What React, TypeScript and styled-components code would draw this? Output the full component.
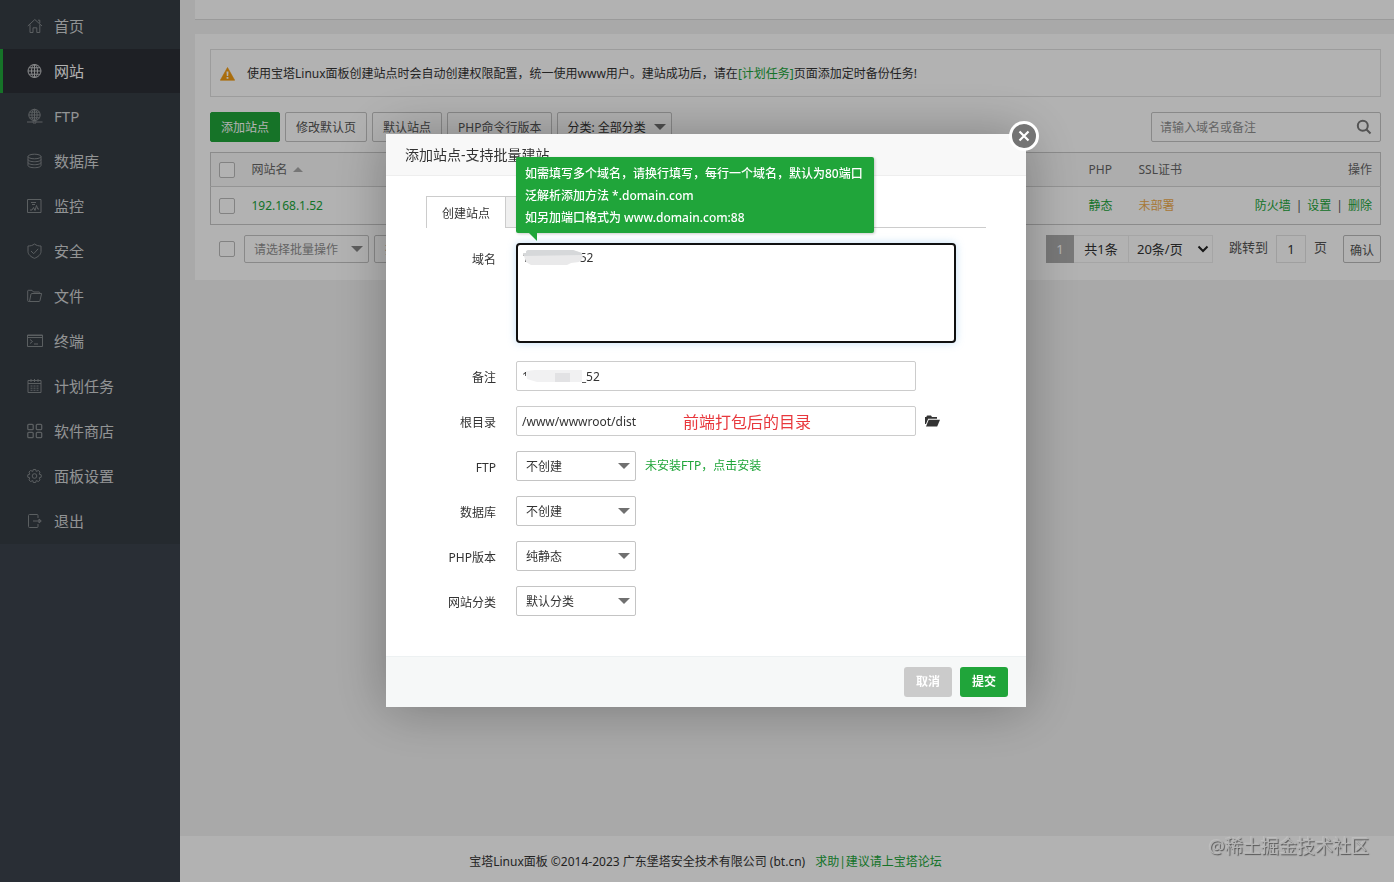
import React from "react";
import styled, { createGlobalStyle, css } from "styled-components";

const GlobalStyle = createGlobalStyle`
  * { box-sizing: border-box; }
  body {
    margin: 0;
    background: #f2f2f2;
    color: #333;
    font-family: "Noto Sans", "Noto Sans CJK SC", sans-serif;
    font-size: 12px;
    line-height: 20px;
  }
  button, input, select, textarea { font: inherit; color: inherit; margin: 0; }
  a { color: #20a53a; text-decoration: none; }
`;

const Page = styled.div`
  display: flex;
  min-height: 100vh;
`;

/* Sidebar */
const Sidebar = styled.nav`
  flex: 0 0 180px;
  background: #3c424d;
`;
const Menu = styled.ul`
  list-style: none;
  margin: 0;
  padding: 4px 0 0;
  background: #363d44;
`;
const MenuItem = styled.li`
  padding-bottom: 1px;
`;
const MenuLink = styled.a<{ $active?: boolean }>`
  display: flex;
  align-items: center;
  gap: 11px;
  height: 44px;
  padding-left: 24px;
  border-left: 3px solid transparent;
  font-size: 15px;
  color: #d2d4d6;
  svg { color: #83888c; }
  ${(p) =>
    p.$active &&
    css`
      background: #2c2e36;
      border-left-color: #20a53a;
      color: #fff;
      svg { color: #c4c6c8; }
    `}
`;
const LineIcon = styled.svg`
  width: 16px;
  height: 16px;
  fill: none;
  stroke: currentColor;
  stroke-width: 1;
`;

/* Main column */
const Main = styled.main`
  flex: 1;
  min-width: 0;
  display: flex;
  flex-direction: column;
`;
const TopCard = styled.div`
  height: 20px;
  margin-left: 15px;
  background: #fff;
  border-bottom: 1px solid #ddd;
`;
const Card = styled.section`
  margin: 14px 0 0 15px;
  padding: 15px 13px 17px 15px;
  background: #fff;
`;
const Notice = styled.div`
  display: flex;
  align-items: center;
  gap: 12px;
  height: 48px;
  padding: 2px 0 0 9px;
  border: 1px solid #e0e0e0;
`;
const Toolbar = styled.div`
  display: flex;
  gap: 5px;
  margin: 15px 0 10px;
`;
const Button = styled.button<{ $primary?: boolean }>`
  height: 30px;
  padding: 2px 10px 0;
  border: 1px solid ${(p) => (p.$primary ? "#20a53a" : "#c4c4c4")};
  border-radius: 2px;
  background: ${(p) => (p.$primary ? "#20a53a" : "#fff")};
  color: ${(p) => (p.$primary ? "#fff" : "#555")};
  white-space: nowrap;
`;
const SearchBox = styled.label`
  display: flex;
  align-items: center;
  width: 230px;
  height: 30px;
  margin-left: auto;
  padding: 0 8px;
  border: 1px solid #c4c4c4;
  border-radius: 2px;
  color: #777;
  input {
    flex: 1;
    min-width: 0;
    border: 0;
    padding: 2px 0 0;
    background: none;
    outline: none;
  }
  input::placeholder { color: #909090; }
`;

const SelectWrap = styled.span<{ $width: number }>`
  position: relative;
  display: inline-block;
  width: ${(p) => p.$width}px;
  svg {
    position: absolute;
    right: 6px;
    top: 50%;
    margin-top: -3px;
    pointer-events: none;
  }
`;
const SelectBox = styled.select<{ $height: number; $muted?: boolean }>`
  appearance: none;
  display: block;
  width: 100%;
  height: ${(p) => p.$height}px;
  padding: 2px 9px 0;
  border: 1px solid #c4c4c4;
  border-radius: 2px;
  background: #fff;
  color: ${(p) => (p.$muted ? "#909090" : "#333")};
`;

const Table = styled.table`
  width: 100%;
  border-collapse: collapse;
  table-layout: fixed;
  border: 1px solid #c8c8c8;
  th, td {
    padding: 0 8px;
    text-align: left;
    font-weight: 400;
    white-space: nowrap;
  }
  th {
    height: 34px;
    background: #f8f8f8;
    color: #666;
    border-bottom: 1px solid #d4d4d4;
  }
  td { height: 38px; }
`;
const Col = styled.col<{ $width?: number }>`
  width: ${(p) => (p.$width ? p.$width + "px" : "auto")};
`;
const RightHead = styled.th`
  && { text-align: right; }
`;
const RightCell = styled.td`
  && { text-align: right; }
  a + a::before {
    content: "|";
    color: #555;
    margin: 0 5px;
  }
`;
const CheckBox = styled.input`
  appearance: none;
  display: block;
  width: 16px;
  height: 16px;
  border: 1px solid #bbb;
  border-radius: 2px;
  background: #fff;
`;
const SortHead = styled.span`
  display: flex;
  align-items: center;
  gap: 5px;
`;
const SslLink = styled.a`
  color: #f0ad4e;
`;

const Pager = styled.div`
  display: flex;
  align-items: center;
  height: 28px;
  margin-top: 10px;
  padding-left: 9px;
`;
const BatchGroup = styled.div`
  display: flex;
  align-items: center;
  gap: 5px;
  padding-left: 9px;
`;
const BatchButton = styled.button`
  height: 28px;
  padding: 2px 10px 0;
  border: 1px solid #c4c4c4;
  border-radius: 2px;
  background: #fff;
  color: #909090;
`;
const PageGroup = styled.div`
  display: flex;
  align-items: center;
  margin-left: auto;
  font-size: 13px;
`;
const Current = styled.span`
  width: 28px;
  height: 28px;
  line-height: 28px;
  text-align: center;
  background: #adadad;
  color: #fff;
`;
const Total = styled.span`
  width: 55px;
  height: 28px;
  line-height: 26px;
  text-align: center;
  border: 1px solid #ececec;
  border-left: 0;
`;
const PageSize = styled.span`
  position: relative;
  width: 84px;
  select {
    appearance: none;
    display: block;
    width: 100%;
    height: 28px;
    padding: 0 8px;
    border: 1px solid #ececec;
    border-left: 0;
    background: #fff;
  }
  svg {
    position: absolute;
    right: 4px;
    top: 10px;
    pointer-events: none;
  }
`;
const Jump = styled.label`
  display: flex;
  align-items: center;
  gap: 8px;
  margin: 0 16px;
  line-height: 24px;
  color: #555;
  span { padding-bottom: 4px; }
  input {
    width: 30px;
    height: 28px;
    padding: 0;
    border: 1px solid #e4e4e4;
    text-align: center;
    color: #333;
  }
`;
const Confirm = styled.button`
  width: 38px;
  height: 28px;
  padding: 4px 0 0;
  border: 1px solid #bbb;
  border-radius: 2px;
  background: #fff;
  font-size: 12px;
  color: #555;
`;

const Footer = styled.footer`
  display: flex;
  justify-content: center;
  gap: 10px;
  margin-top: auto;
  padding: 16px 163px 10px 0;
  background: #fff;
`;

/* Dialog */
const Overlay = styled.div`
  position: fixed;
  inset: 0;
  display: flex;
  justify-content: center;
  align-items: flex-start;
  padding: 134px 0 0 18px;
  background: rgba(0, 0, 0, 0.3);
`;
const Dialog = styled.section`
  position: relative;
  width: 640px;
  background: #fff;
  box-shadow: 1px 1px 50px rgba(0, 0, 0, 0.3);
`;
const DialogTitle = styled.h2`
  margin: 0;
  height: 42px;
  padding-left: 19px;
  border-bottom: 1px solid #eee;
  background: #f8f8f8;
  font-size: 14px;
  font-weight: 400;
  line-height: 42px;
`;
const CloseButton = styled.button`
  position: absolute;
  top: -13px;
  right: -13px;
  width: 30px;
  height: 30px;
  display: flex;
  align-items: center;
  justify-content: center;
  padding: 0;
  border: 3px solid #fff;
  border-radius: 50%;
  background: #747474;
  color: #fff;
`;
const DialogBody = styled.div`
  padding: 20px 40px 40px;
`;
const Tabs = styled.div`
  display: flex;
  height: 32px;
  border-bottom: 1px solid #ccc;
`;
const Tab = styled.button<{ $active?: boolean }>`
  width: 80px;
  height: ${(p) => (p.$active ? 32 : 31)}px;
  padding: 2px 0 0;
  border: 1px solid #ccc;
  border-bottom: 0;
  border-left-width: ${(p) => (p.$active ? 1 : 0)}px;
  background: ${(p) => (p.$active ? "#fff" : "#efefef")};
  & + & { width: 90px; }
`;
const Form = styled.form`
  display: flex;
  flex-direction: column;
  gap: 15px;
  padding-top: 15px;
`;
const Row = styled.div`
  display: flex;
  align-items: flex-start;
`;
const Label = styled.label`
  width: 70px;
  height: 30px;
  margin-right: 20px;
  padding-top: 7px;
  text-align: right;
`;
const Field = styled.div`
  position: relative;
  display: flex;
  align-items: center;
  gap: 9px;
`;
const TextArea = styled.textarea`
  display: block;
  width: 440px;
  height: 100px;
  margin-bottom: 3px;
  padding: 3px 4px;
  border: 2px solid #101010;
  border-radius: 4px;
  outline: none;
  resize: none;
  line-height: 20px;
  box-shadow: 0 0 8px rgba(102, 175, 233, 0.4);
`;
const TextInput = styled.input`
  width: 400px;
  height: 30px;
  padding: 0 5px;
  border: 1px solid #ccc;
  border-radius: 2px;
`;
const Smudge = styled.svg`
  position: absolute;
  left: 7px;
  top: 6px;
`;
const Annotation = styled.span`
  position: absolute;
  left: 167px;
  top: 6px;
  font-size: 16px;
  color: #e8383d;
`;
const FolderButton = styled.button`
  display: flex;
  padding: 0;
  border: 0;
  background: none;
`;
const Tip = styled.div`
  position: absolute;
  left: 130px;
  top: 23px;
  width: 358px;
  padding: 6px 9px 4px;
  border-radius: 2px;
  background: #20a53a;
  box-shadow: 1px 1px 3px rgba(0, 0, 0, 0.2);
  color: #fff;
  font-weight: 500;
  line-height: 22px;
  white-space: nowrap;
  svg {
    position: absolute;
    left: 13px;
    top: 100%;
  }
`;
const DialogFooter = styled.div`
  display: flex;
  justify-content: flex-end;
  gap: 8px;
  padding: 10px 18px;
  border-top: 1px solid #edf1f2;
  background: #f6f8f8;
`;
const ActionButton = styled.button<{ $primary?: boolean }>`
  width: 48px;
  height: 30px;
  padding: 0;
  border: 0;
  border-radius: 3px;
  background: ${(p) => (p.$primary ? "#20a53a" : "#cbcbcb")};
  color: #fff;
  font-weight: 700;
`;
const Watermark = styled.div`
  position: fixed;
  right: 25px;
  bottom: 23px;
  font-size: 18px;
  line-height: 26px;
  color: #b4b4b4;
  text-shadow: 1px 1px 1px #555, -1px -1px 0 #bebebe;
`;

const icons: Record<string, React.ReactNode> = {
  home: <path d="M.8 8 7.8 1.5 15 8M3 6.5V14.5H6V9.8H9.8V14.5H12.8V6.5M11 2.2H12.8V5.2" />,
  globe: (
    <>
      <circle cx="7.5" cy="8" r="6.5" />
      <ellipse cx="7.5" cy="8" rx="3" ry="6.5" />
      <path d="M7.5 1.5v13M1 8h13M2 4.8h11M2 11.2h11" />
    </>
  ),
  ftp: (
    <>
      <circle cx="7.5" cy="7" r="5.7" />
      <ellipse cx="7.5" cy="7" rx="2.6" ry="5.7" />
      <path d="M7.5 1.3v12M1.8 7h11.4M2.8 4.2h9.4M2.8 9.8h9.4M0 14h5.5M9.5 14H15.5M6 13h3v2H6z" />
    </>
  ),
  database: (
    <>
      <ellipse cx="7.5" cy="3.5" rx="6.5" ry="2.3" />
      <path d="M1 3.5V12.5C1 13.8 4 14.7 7.5 14.7S14 13.8 14 12.5V3.5M1 6.5C1 7.8 4 8.7 7.5 8.7S14 7.8 14 6.5M1 9.5C1 10.8 4 11.7 7.5 11.7S14 10.8 14 9.5" />
    </>
  ),
  monitor: <path d="M.5 1.5h13.5v13H.5zM4 4.5h5M5 6.5h3M3 12H5L6.5 9.5 8 12.5 9.5 7.5 10.8 11H12" />,
  shield: <path d="M7.5 1C9.5 2.5 11.5 3 14 3V8.5C14 11.5 11 14 7.5 15.3C4 14 1 11.5 1 8.5V3C3.5 3 5.5 2.5 7.5 1zM4 8 6.7 10.7 11.2 5.8" />,
  folder: <path d="M2.5 13.5H1.5Q.7 13.5.7 12.5V3Q.7 2.3 1.5 2.3H5L6.5 4H12Q12.7 4 12.7 4.7V5.7M2.5 13.5 4 6Q4.2 5.5 5 5.5H14.6L13 12.5Q12.8 13.5 12 13.5z" />,
  terminal: <path d="M0 2.5h15M.5 2v11.5h15V2zM.5 4.500h15M3 6.5 5.5 8.5 3 10.5M7 11h4" />,
  calendar: <path d="M1 2.5h13v12H1zM1 5.5h13M4 1v3M7.5 1v3M11 1v3M3.5 8h2M6.5 8h2M9.5 8h2M3.5 10.2h2M6.5 10.2h2M9.5 10.2h2M3.5 12.3h2M6.5 12.3h2M9.5 12.3h2" />,
  apps: (
    <g strokeWidth="1.3">
      <rect x=".8" y="1.3" width="5.4" height="5.4" rx="1" />
      <rect x="9.3" y="1.3" width="5.4" height="5.4" rx="1" />
      <rect x=".8" y="9.3" width="5.4" height="5.4" rx="1" />
      <rect x="9.3" y="9.3" width="5.4" height="5.4" rx="1" />
    </g>
  ),
  gear: (
    <>
      <circle cx="7.5" cy="8" r="2.3" />
      <path d="M6.3 1.5H8.7L9.2 3.4 11.5 2.5 13 4.1 12.2 6.2 14.2 6.8V9.2L12.2 9.8 13 11.9 11.5 13.5 9.2 12.6 8.7 14.5H6.3L5.8 12.6 3.5 13.5 2 11.9 2.8 9.8.8 9.2V6.8L2.8 6.2 2 4.1 3.5 2.5 5.8 3.4z" />
    </>
  ),
  exit: <path d="M11 5V2.5Q11 1.5 10 1.5H2.5Q1.5 1.5 1.5 2.5V13.5Q1.5 14.5 2.5 14.5H10Q11 14.5 11 13.5V11M6 8H14M12 6 14.3 8 12 10z" />,
};

const menu = [
  { icon: "home", text: "首页" },
  { icon: "globe", text: "网站", active: true },
  { icon: "ftp", text: "FTP" },
  { icon: "database", text: "数据库" },
  { icon: "monitor", text: "监控" },
  { icon: "shield", text: "安全" },
  { icon: "folder", text: "文件" },
  { icon: "terminal", text: "终端" },
  { icon: "calendar", text: "计划任务" },
  { icon: "apps", text: "软件商店" },
  { icon: "gear", text: "面板设置" },
  { icon: "exit", text: "退出" },
];

const selects = [
  { id: "ftp", label: "FTP", value: "不创建", hint: "未安装FTP，点击安装" },
  { id: "db", label: "数据库", value: "不创建" },
  { id: "php", label: "PHP版本", value: "纯静态" },
  { id: "type", label: "网站分类", value: "默认分类" },
];

function Dropdown(props: {
  id?: string;
  label?: string;
  value: string;
  width: number;
  height?: number;
  muted?: boolean;
}) {
  return (
    <SelectWrap $width={props.width}>
      <SelectBox id={props.id} aria-label={props.label} $height={props.height ?? 30} $muted={props.muted}>
        <option>{props.value}</option>
      </SelectBox>
      <svg width="12" height="6" viewBox="0 0 12 6">
        <path d="M0 0H12L6 6z" fill={props.muted ? "#888" : "#707070"} />
      </svg>
    </SelectWrap>
  );
}

export default function App() {
  return (
    <>
      <GlobalStyle />
      <Page>
        <Sidebar>
          <Menu>
            {menu.map((m) => (
              <MenuItem key={m.icon}>
                <MenuLink href="#" $active={m.active}>
                  <LineIcon viewBox="0 0 16 16">{icons[m.icon]}</LineIcon>
                  {m.text}
                </MenuLink>
              </MenuItem>
            ))}
          </Menu>
        </Sidebar>
        <Main>
          <TopCard />
          <Card>
            <Notice>
              <svg width="15" height="14" viewBox="0 0 15 14">
                <path d="M7.5.5 14.7 13.3H.3z" fill="#f39c12" stroke="#f39c12" strokeLinejoin="round" strokeWidth=".6" />
                <path d="M6.5 4.5h2L8.2 9H6.8zM6.6 10h1.8v1.8H6.6z" fill="#fff" />
              </svg>
              <span>
                使用宝塔Linux面板创建站点时会自动创建权限配置，统一使用www用户。建站成功后，请在
                <a href="#">[计划任务]</a>页面添加定时备份任务!
              </span>
            </Notice>
            <Toolbar>
              <Button $primary>添加站点</Button>
              <Button>修改默认页</Button>
              <Button>默认站点</Button>
              <Button>PHP命令行版本</Button>
              <Dropdown label="分类" value="分类: 全部分类" width={115} />
              <SearchBox>
                <input aria-label="搜索" placeholder="请输入域名或备注" />
                <svg width="16" height="16" viewBox="0 0 16 16" fill="none" stroke="currentColor" strokeWidth="2">
                  <circle cx="6.8" cy="6.8" r="5" />
                  <path d="M10.5 10.5 14.5 14.5" />
                </svg>
              </SearchBox>
            </Toolbar>
            <Table>
              <colgroup>
                <Col $width={33} />
                <Col />
                <Col $width={50} />
                <Col $width={100} />
                <Col $width={150} />
              </colgroup>
              <thead>
                <tr>
                  <th><CheckBox type="checkbox" aria-label="全选" /></th>
                  <th>
                    <SortHead>
                      网站名
                      <svg width="10" height="5" viewBox="0 0 10 5"><path d="M5 0 10 5H0z" fill="#aaa" /></svg>
                    </SortHead>
                  </th>
                  <th>PHP</th>
                  <th>SSL证书</th>
                  <RightHead>操作</RightHead>
                </tr>
              </thead>
              <tbody>
                <tr>
                  <td><CheckBox type="checkbox" aria-label="192.168.1.52" /></td>
                  <td><a href="#">192.168.1.52</a></td>
                  <td><a href="#">静态</a></td>
                  <td><SslLink href="#">未部署</SslLink></td>
                  <RightCell><a href="#">防火墙</a><a href="#">设置</a><a href="#">删除</a></RightCell>
                </tr>
              </tbody>
            </Table>
            <Pager>
              <CheckBox type="checkbox" aria-label="选择全部站点" />
              <BatchGroup>
                <Dropdown label="批量操作" value="请选择批量操作" width={125} height={28} muted />
                <BatchButton>批量操作</BatchButton>
              </BatchGroup>
              <PageGroup>
                <Current>1</Current>
                <Total>共1条</Total>
                <PageSize>
                  <select aria-label="每页条数"><option>20条/页</option></select>
                  <svg width="12" height="8" viewBox="0 0 12 8"><path d="M1.5 1.5 6 6 10.5 1.5" fill="none" stroke="#222" strokeWidth="2" /></svg>
                </PageSize>
                <Jump><span>跳转到</span><input defaultValue="1" /><span>页</span></Jump>
                <Confirm>确认</Confirm>
              </PageGroup>
            </Pager>
          </Card>
          <Footer>
            <span>宝塔Linux面板 ©2014-2023 广东堡塔安全技术有限公司 (bt.cn)</span>
            <a href="#">求助|建议请上宝塔论坛</a>
          </Footer>
        </Main>
      </Page>

      <Overlay>
        <Dialog role="dialog" aria-labelledby="dialog-title">
          <DialogTitle id="dialog-title">添加站点-支持批量建站</DialogTitle>
          <CloseButton aria-label="关闭">
            <svg width="12" height="12" viewBox="0 0 12 12"><path d="M1.5 1.5 10.5 10.5M10.5 1.5 1.5 10.5" stroke="#fff" strokeWidth="2.2" /></svg>
          </CloseButton>
          <DialogBody>
            <Tabs>
              <Tab type="button" $active>创建站点</Tab>
              <Tab type="button" aria-label="批量创建" />
            </Tabs>
            <Form id="site-form">
              <Row>
                <Label htmlFor="domain">域名</Label>
                <Field>
                  <TextArea id="domain" defaultValue="192.168.1.52" />
                  <Smudge width="60" height="17" viewBox="0 0 60 17">
                    <path d="M0 4 5 1H50L59 4 60 9 56 13 48 14 44 16H8L3 13z" fill="#e9e9ea" />
                    <path d="M0 4 5 1H50L59 4V6L1 7z" fill="#d6d8da" />
                    <path d="M0 0h3v4H0z" fill="#fff" />
                  </Smudge>
                </Field>
              </Row>
              <Row>
                <Label htmlFor="note">备注</Label>
                <Field>
                  <TextInput id="note" defaultValue="192_168_1_52" />
                  <Smudge width="60" height="17" viewBox="0 0 60 17">
                    <path d="M3 1H59V17H3z" fill="#fff" />
                    <path d="M3 4 12 3H59V15H14L4 12z" fill="#f1f1f2" />
                    <path d="M32 6h15v9H32z" fill="#e2e2e4" />
                    <path d="M0 9h3v7H0z" fill="#fff" />
                  </Smudge>
                </Field>
              </Row>
              <Row>
                <Label htmlFor="root">根目录</Label>
                <Field>
                  <TextInput id="root" defaultValue="/www/wwwroot/dist" />
                  <Annotation>前端打包后的目录</Annotation>
                  <FolderButton type="button" aria-label="选择目录">
                    <svg width="15" height="12" viewBox="0 0 15 12" fill="#333">
                      <path d="M0 9V2H1.5V1.5Q1.5.5 2.5.5H6L7 2H12V3.8H3.2L1 9z" />
                      <path d="M3.7 4.8H15L12.2 11.5H1z" />
                    </svg>
                  </FolderButton>
                </Field>
              </Row>
              {selects.map((s) => (
                <Row key={s.id}>
                  <Label htmlFor={s.id}>{s.label}</Label>
                  <Field>
                    <Dropdown id={s.id} value={s.value} width={120} />
                    {s.hint && <a href="#">{s.hint}</a>}
                  </Field>
                </Row>
              ))}
            </Form>
          </DialogBody>
          <DialogFooter>
            <ActionButton type="button">取消</ActionButton>
            <ActionButton type="submit" form="site-form" $primary>提交</ActionButton>
          </DialogFooter>
          <Tip role="tooltip">
            如需填写多个域名，请换行填写，每行一个域名，默认为80端口
            <br />
            泛解析添加方法 *.domain.com
            <br />
            如另加端口格式为 www.domain.com:88
            <svg width="8" height="8" viewBox="0 0 8 8"><path d="M0 0H8V8z" fill="#20a53a" /></svg>
          </Tip>
        </Dialog>
      </Overlay>
      <Watermark>@稀土掘金技术社区</Watermark>
    </>
  );
}
